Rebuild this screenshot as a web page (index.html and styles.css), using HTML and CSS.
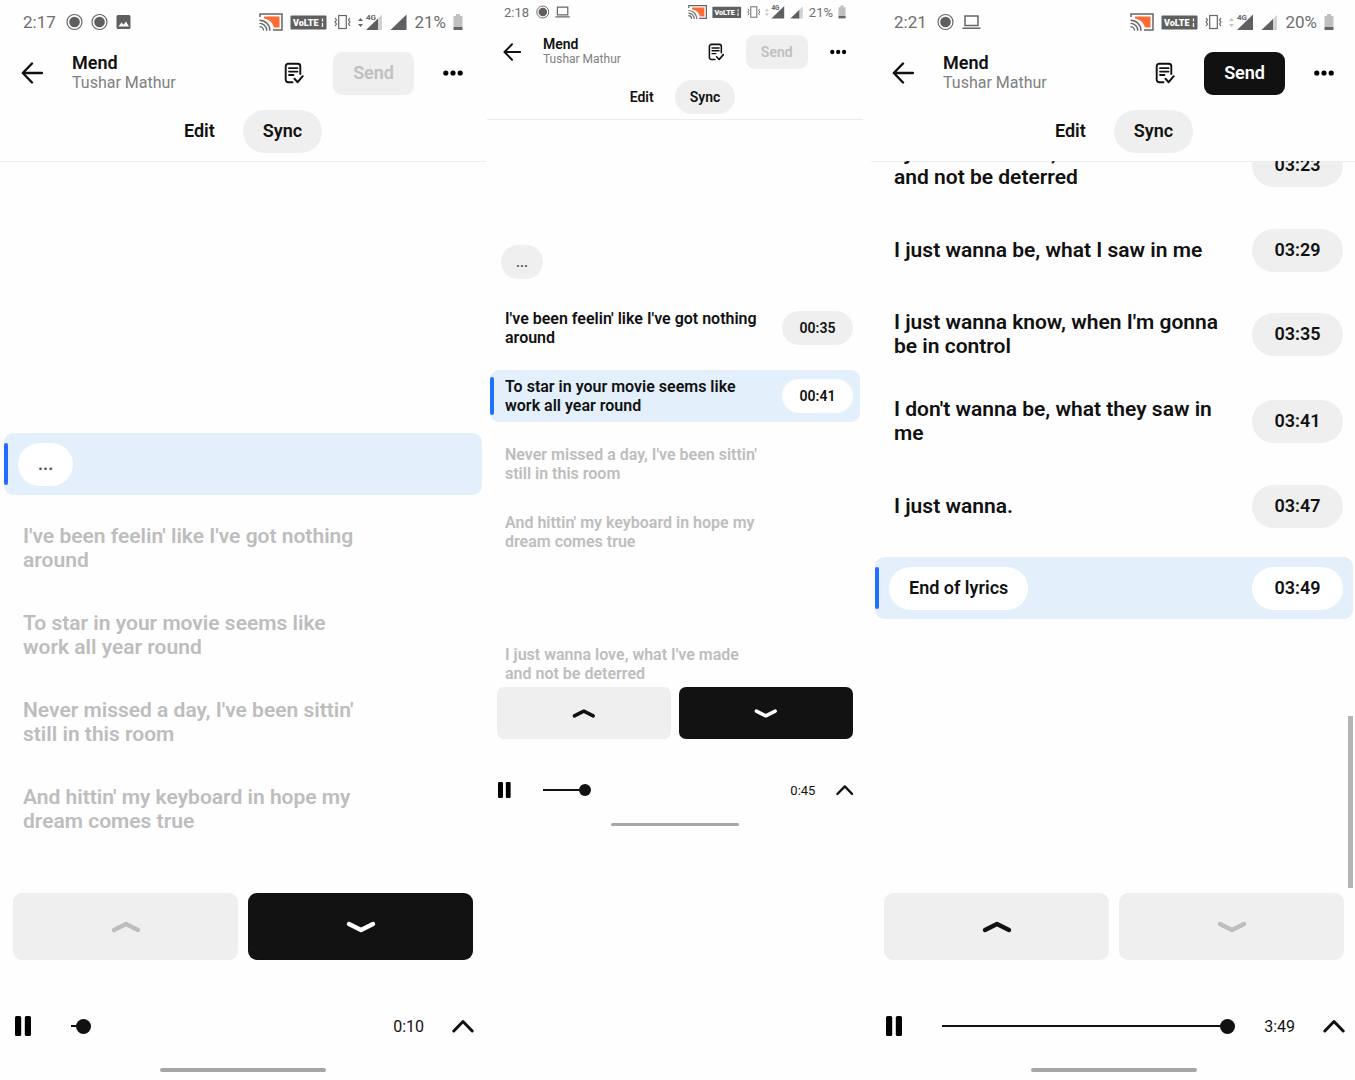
FILE: index.html
```
<!DOCTYPE html>
<html lang="en">
<head>
  <meta charset="UTF-8">
  <meta name="viewport" content="width=device-width, initial-scale=1.0">
  <title>Mend - Lyrics Sync</title>
  <link rel="stylesheet" href="styles.css">
</head>
<body>
  <!-- Shared icons -->
  <svg class="sprite" aria-hidden="true">
    <symbol id="icon-record" viewBox="0 0 17 20">
      <circle cx="8.500" cy="10" r="7.500" fill="none" stroke="#666" stroke-width="1.200"/>
      <circle cx="8.500" cy="10" r="5.300" fill="#5f5f5f"/>
    </symbol>
    <symbol id="icon-image" viewBox="0 0 15 20">
      <rect x="0.500" y="3" width="14" height="14" rx="1.500" fill="#5f5f5f"/>
      <path d="M2.500 14.500l3-4 2 2.200 2.500-3.200 3 5z" fill="#fff"/>
    </symbol>
    <symbol id="icon-laptop" viewBox="0 0 19 20">
      <path d="M3 4h13v9.500H3zM0.500 16.200h18" fill="none" stroke="#666" stroke-width="1.500"/>
    </symbol>
    <symbol id="icon-cast" viewBox="0 0 24 20">
      <path d="M1 5V2h22v16H14" fill="none" stroke="#666" stroke-width="1.500"/>
      <path d="M5 4.500h15.500v11H15C13.500 10.500 10.500 7.500 5 6.500z" fill="#ff6b35"/>
      <path d="M0.500 8.200a10.500 10.500 0 0 1 10.500 10.500M0.500 11.400a7.300 7.300 0 0 1 7.300 7.300M0.500 14.600a4 4 0 0 1 4 4" fill="none" stroke="#666" stroke-width="1.400"/>
    </symbol>
    <symbol id="icon-volte" viewBox="0 0 37 20">
      <rect x="0.500" y="3.500" width="36" height="14" rx="1" fill="#5f5f5f"/>
      <text x="3" y="14" class="volte-text">VoLTE</text>
      <path d="M32.500 6.500v3M32.500 11v4" stroke="#fff" stroke-width="1.300"/>
    </symbol>
    <symbol id="icon-vibrate" viewBox="0 0 17 20">
      <rect x="4.700" y="3.500" width="7.600" height="13" fill="none" stroke="#666" stroke-width="1.200"/>
      <path d="M1 6l1.500 2L1 10l1.500 2L1 14M16 6l-1.500 2L16 10l-1.500 2 1.500 2" fill="none" stroke="#666" stroke-width="1.200"/>
    </symbol>
    <symbol id="icon-4g" viewBox="0 0 25 20">
      <path d="M0 9l2.500-3L5 9zM0 12l2.500 3L5 12z" fill="#666"/>
      <path d="M8 18L20 6.500V18z" fill="#5f5f5f"/>
      <path d="M20 6.500l4-4V18h-4z" fill="#d2d2d2"/>
      <text x="8" y="8" class="net-text">4G</text>
    </symbol>
    <symbol id="icon-4g-full" viewBox="0 0 25 20">
      <path d="M0 9l2.500-3L5 9zM0 12l2.500 3L5 12z" fill="#c4c4c4"/>
      <path d="M8 18L24 2.500V18z" fill="#5f5f5f"/>
      <text x="8" y="8" class="net-text">4G</text>
    </symbol>
    <symbol id="icon-signal" viewBox="0 0 17 20">
      <path d="M0.500 18L16.500 2.500V18z" fill="#5f5f5f"/>
    </symbol>
    <symbol id="icon-signal-low" viewBox="0 0 17 20">
      <path d="M0.500 18L12 7v11z" fill="#5f5f5f"/>
      <path d="M12 7l4-4v15h-4z" fill="#d2d2d2"/>
    </symbol>
    <symbol id="icon-battery" viewBox="0 0 10 20">
      <path d="M0.500 4H3V2h4v2h2.500v11h-9z" fill="#c0c0c0"/>
      <path d="M0.500 15h9v3h-9z" fill="#666"/>
    </symbol>
    <symbol id="icon-back" viewBox="0 0 22 22">
      <path d="M11 1.500L1.800 11l9.200 9.500M2 11h19" fill="none" stroke="#111" stroke-width="2.400" stroke-linecap="round" stroke-linejoin="round"/>
    </symbol>
    <symbol id="icon-doc" viewBox="0 0 20 22">
      <path d="M8.500 20.200H4.200a2.500 2.500 0 0 1-2.500-2.500V4.200a2.500 2.500 0 0 1 2.500-2.500h9.600a2.500 2.500 0 0 1 2.500 2.500V12" fill="none" stroke="#111" stroke-width="1.900" stroke-linecap="round"/>
      <path d="M5 6.200h8.500M5 9.600h8.500M5 13h4.500" fill="none" stroke="#111" stroke-width="1.800" stroke-linecap="round"/>
      <path d="M10.500 16.800l3.200 3.400 5-6" fill="none" stroke="#111" stroke-width="2" stroke-linecap="round" stroke-linejoin="round"/>
    </symbol>
    <symbol id="icon-more" viewBox="0 0 20 22">
      <circle cx="2.800" cy="11" r="2.600"/>
      <circle cx="10" cy="11" r="2.600"/>
      <circle cx="17.200" cy="11" r="2.600"/>
    </symbol>
    <symbol id="icon-up" viewBox="0 0 30 14">
      <path d="M3 10L15 4l12 6" fill="none" stroke="currentColor" stroke-width="4.400" stroke-linecap="round" stroke-linejoin="round"/>
    </symbol>
    <symbol id="icon-down" viewBox="0 0 30 14">
      <path d="M3 4l12 6 12-6" fill="none" stroke="currentColor" stroke-width="4.400" stroke-linecap="round" stroke-linejoin="round"/>
    </symbol>
    <symbol id="icon-pause" viewBox="0 0 16 20">
      <rect x="0" y="0" width="6.200" height="20" rx="1.500"/>
      <rect x="9.800" y="0" width="6.200" height="20" rx="1.500"/>
    </symbol>
    <symbol id="icon-expand" viewBox="0 0 22 20">
      <path d="M1.800 15L11 5.500l9.200 9.500" fill="none" stroke="#111" stroke-width="3" stroke-linecap="round" stroke-linejoin="round"/>
    </symbol>
  </svg>

  <main class="screens">
    <!-- Start of the song -->
    <section class="phone">
      <div class="status">
        <span class="clock">2:17</span>
        <svg viewBox="0 0 17 20"><use href="#icon-record"/></svg>
        <svg viewBox="0 0 17 20"><use href="#icon-record"/></svg>
        <svg viewBox="0 0 15 20"><use href="#icon-image"/></svg>
        <div class="status-right">
          <svg viewBox="0 0 24 20"><use href="#icon-cast"/></svg>
          <svg viewBox="0 0 37 20"><use href="#icon-volte"/></svg>
          <svg viewBox="0 0 17 20"><use href="#icon-vibrate"/></svg>
          <svg viewBox="0 0 25 20"><use href="#icon-4g"/></svg>
          <svg viewBox="0 0 17 20"><use href="#icon-signal"/></svg>
          <span class="percent">21%</span>
          <svg viewBox="0 0 10 20"><use href="#icon-battery"/></svg>
        </div>
      </div>
      <header class="topbar">
        <button class="icon-button" aria-label="Back"><svg viewBox="0 0 22 22"><use href="#icon-back"/></svg></button>
        <div class="song">
          <h2>Mend</h2>
          <p>Tushar Mathur</p>
        </div>
        <button class="icon-button" aria-label="Guidelines"><svg viewBox="0 0 20 22"><use href="#icon-doc"/></svg></button>
        <button class="send" disabled>Send</button>
        <button class="icon-button" aria-label="More"><svg viewBox="0 0 20 22"><use href="#icon-more"/></svg></button>
      </header>
      <nav class="tabs">
        <button class="tab">Edit</button>
        <button class="tab active">Sync</button>
      </nav>
      <ul class="lyrics">
        <li class="row current"><button class="pill dots">...</button></li>
        <li class="row pending"><p>I've been feelin' like I've got nothing around</p></li>
        <li class="row pending"><p>To star in your movie seems like work all year round</p></li>
        <li class="row pending"><p>Never missed a day, I've been sittin' still in this room</p></li>
        <li class="row pending"><p>And hittin' my keyboard in hope my dream comes true</p></li>
      </ul>
      <div class="steps">
        <button class="step" aria-label="Previous line" disabled><svg viewBox="0 0 30 14"><use href="#icon-up"/></svg></button>
        <button class="step step-dark" aria-label="Next line"><svg viewBox="0 0 30 14"><use href="#icon-down"/></svg></button>
      </div>
      <div class="player">
        <button class="icon-button" aria-label="Pause"><svg viewBox="0 0 16 20"><use href="#icon-pause"/></svg></button>
        <input type="range" class="seek" aria-label="Position" min="0" max="229" value="10" style="--played: 0.044">
        <span class="time">0:10</span>
        <button class="icon-button" aria-label="Expand player"><svg viewBox="0 0 22 20"><use href="#icon-expand"/></svg></button>
      </div>
      <div class="home-bar"></div>
    </section>

    <!-- Lines being synced -->
    <section class="phone phone-small">
      <div class="status">
        <span class="clock">2:18</span>
        <svg viewBox="0 0 17 20"><use href="#icon-record"/></svg>
        <svg viewBox="0 0 19 20"><use href="#icon-laptop"/></svg>
        <div class="status-right">
          <svg viewBox="0 0 24 20"><use href="#icon-cast"/></svg>
          <svg viewBox="0 0 37 20"><use href="#icon-volte"/></svg>
          <svg viewBox="0 0 17 20"><use href="#icon-vibrate"/></svg>
          <svg viewBox="0 0 25 20"><use href="#icon-4g-full"/></svg>
          <svg viewBox="0 0 17 20"><use href="#icon-signal-low"/></svg>
          <span class="percent">21%</span>
          <svg viewBox="0 0 10 20"><use href="#icon-battery"/></svg>
        </div>
      </div>
      <header class="topbar">
        <button class="icon-button" aria-label="Back"><svg viewBox="0 0 22 22"><use href="#icon-back"/></svg></button>
        <div class="song">
          <h2>Mend</h2>
          <p>Tushar Mathur</p>
        </div>
        <button class="icon-button" aria-label="Guidelines"><svg viewBox="0 0 20 22"><use href="#icon-doc"/></svg></button>
        <button class="send" disabled>Send</button>
        <button class="icon-button" aria-label="More"><svg viewBox="0 0 20 22"><use href="#icon-more"/></svg></button>
      </header>
      <nav class="tabs">
        <button class="tab">Edit</button>
        <button class="tab active">Sync</button>
      </nav>
      <ul class="lyrics">
        <li class="row"><button class="pill dots">...</button></li>
        <li class="row"><p>I've been feelin' like I've got nothing around</p><button class="pill stamp">00:35</button></li>
        <li class="row current"><p>To star in your movie seems like work all year round</p><button class="pill stamp">00:41</button></li>
        <li class="row pending"><p>Never missed a day, I've been sittin' still in this room</p></li>
        <li class="row pending"><p>And hittin' my keyboard in hope my dream comes true</p></li>
        <li class="row pending"></li>
        <li class="row pending"><p>I just wanna love, what I've made and not be deterred</p></li>
      </ul>
      <div class="steps">
        <button class="step" aria-label="Previous line"><svg viewBox="0 0 30 14"><use href="#icon-up"/></svg></button>
        <button class="step step-dark" aria-label="Next line"><svg viewBox="0 0 30 14"><use href="#icon-down"/></svg></button>
      </div>
      <div class="player">
        <button class="icon-button" aria-label="Pause"><svg viewBox="0 0 16 20"><use href="#icon-pause"/></svg></button>
        <input type="range" class="seek" aria-label="Position" min="0" max="229" value="45" style="--played: 0.197">
        <span class="time">0:45</span>
        <button class="icon-button" aria-label="Expand player"><svg viewBox="0 0 22 20"><use href="#icon-expand"/></svg></button>
      </div>
      <div class="home-bar"></div>
    </section>

    <!-- End of the song -->
    <section class="phone phone-end">
      <div class="status">
        <span class="clock">2:21</span>
        <svg viewBox="0 0 17 20"><use href="#icon-record"/></svg>
        <svg viewBox="0 0 19 20"><use href="#icon-laptop"/></svg>
        <div class="status-right">
          <svg viewBox="0 0 24 20"><use href="#icon-cast"/></svg>
          <svg viewBox="0 0 37 20"><use href="#icon-volte"/></svg>
          <svg viewBox="0 0 17 20"><use href="#icon-vibrate"/></svg>
          <svg viewBox="0 0 25 20"><use href="#icon-4g-full"/></svg>
          <svg viewBox="0 0 17 20"><use href="#icon-signal-low"/></svg>
          <span class="percent">20%</span>
          <svg viewBox="0 0 10 20"><use href="#icon-battery"/></svg>
        </div>
      </div>
      <header class="topbar">
        <button class="icon-button" aria-label="Back"><svg viewBox="0 0 22 22"><use href="#icon-back"/></svg></button>
        <div class="song">
          <h2>Mend</h2>
          <p>Tushar Mathur</p>
        </div>
        <button class="icon-button" aria-label="Guidelines"><svg viewBox="0 0 20 22"><use href="#icon-doc"/></svg></button>
        <button class="send">Send</button>
        <button class="icon-button" aria-label="More"><svg viewBox="0 0 20 22"><use href="#icon-more"/></svg></button>
      </header>
      <nav class="tabs">
        <button class="tab">Edit</button>
        <button class="tab active">Sync</button>
      </nav>
      <ul class="lyrics">
        <li class="row"><p>I just wanna love, what I've made and not be deterred</p><button class="pill stamp">03:23</button></li>
        <li class="row"><p>I just wanna be, what I saw in me</p><button class="pill stamp">03:29</button></li>
        <li class="row"><p>I just wanna know, when I'm gonna be in control</p><button class="pill stamp">03:35</button></li>
        <li class="row"><p>I don't wanna be, what they saw in me</p><button class="pill stamp">03:41</button></li>
        <li class="row"><p>I just wanna.</p><button class="pill stamp">03:47</button></li>
        <li class="row current"><button class="pill">End of lyrics</button><button class="pill stamp">03:49</button></li>
      </ul>
      <div class="steps">
        <span class="scrollbar"></span>
        <button class="step" aria-label="Previous line"><svg viewBox="0 0 30 14"><use href="#icon-up"/></svg></button>
        <button class="step" aria-label="Next line" disabled><svg viewBox="0 0 30 14"><use href="#icon-down"/></svg></button>
      </div>
      <div class="player">
        <button class="icon-button" aria-label="Pause"><svg viewBox="0 0 16 20"><use href="#icon-pause"/></svg></button>
        <input type="range" class="seek" aria-label="Position" min="0" max="229" value="229" style="--played: 1">
        <span class="time">3:49</span>
        <button class="icon-button" aria-label="Expand player"><svg viewBox="0 0 22 20"><use href="#icon-expand"/></svg></button>
      </div>
      <div class="home-bar"></div>
    </section>
  </main>
</body>
</html>
```
FILE: styles.css
```
/* General */
* {
  box-sizing: border-box;
}

body {
  margin: 0;
  font-family: Roboto, "Liberation Sans", sans-serif;
  background-color: #fefefe;
  color: #111111;
  overflow: hidden;
}

h2, p, ul {
  margin: 0;
  padding: 0;
}

button {
  padding: 0;
  border: none;
  background: none;
  font-family: inherit;
  color: inherit;
  cursor: pointer;
}

svg {
  display: block;
}

.sprite {
  display: none;
}

.screens {
  display: grid;
  grid-template-columns: 486fr 385fr 484fr;
}

/* Phone */
.phone {
  display: flex;
  flex-direction: column;
  min-width: 0;
  height: 100vh;
}

.phone-small {
  height: auto;
  align-self: start;
  padding: 0 8px 0 1px;
}

.phone-end {
  margin-right: -2px;
}

/* Status bar */
.status {
  display: flex;
  align-items: center;
  gap: 8px;
  height: 44px;
  padding: 0 23px;
  font-size: 17px;
  color: #6e6e6e;
}

.status svg {
  height: 20px;
  flex: none;
}

.clock {
  margin-right: 2px;
}

.status-right {
  display: flex;
  align-items: center;
  gap: 7px;
  margin-left: auto;
}

.volte-text {
  font-size: 9px;
  font-weight: 900;
  fill: #ffffff;
}

.net-text {
  font-size: 8px;
  font-weight: 700;
  fill: #666666;
}

/* Top bar */
.topbar {
  display: flex;
  align-items: center;
  gap: 29px;
  height: 58px;
  padding: 0 23px 0 21px;
}

.topbar svg {
  height: 22px;
}

.song {
  flex: 1;
}

.song h2 {
  font-size: 18px;
  font-weight: 600;
  line-height: 20px;
}

.song p {
  font-size: 16px;
  line-height: 20px;
  color: #808080;
}

.send {
  height: 43px;
  padding: 0 20px 2px;
  border-radius: 9px;
  font-size: 18px;
  font-weight: 600;
  color: #ffffff;
  background-color: #111111;
}

.send:disabled {
  color: #c0c0c0;
  background-color: #efefef;
}

/* Tabs */
.tabs {
  display: flex;
  justify-content: center;
  gap: 8px;
  padding: 8px 0;
  border-bottom: 1px solid #ececec;
}

.tab {
  height: 43px;
  padding: 0 20px 2px;
  border-radius: 22px;
  font-size: 18px;
  font-weight: 600;
}

.tab.active {
  background-color: #efefef;
}

/* Lyrics */
.lyrics {
  position: relative;
  display: flex;
  flex-direction: column;
  flex: 1;
  gap: 20px;
  min-height: 0;
  margin-top: -1px;
  padding: 272px 4px 0;
  overflow: hidden;
  list-style: none;
}

.phone-end .lyrics {
  justify-content: flex-end;
  padding: 0 4px 274px;
}

.row {
  position: relative;
  display: flex;
  align-items: center;
  flex: none;
  min-height: 62px;
  padding: 9px 10px 9px 14px;
  border-radius: 9px;
}

.row p {
  width: 76%;
  padding: 0 0 1px 5px;
  font-size: 21px;
  font-weight: 600;
  line-height: 24px;
}

.row.pending {
  color: #bdbdbd;
}

.row.current {
  background-color: #e3f0fc;
}

.row.current::before {
  content: "";
  position: absolute;
  left: 0;
  top: 10px;
  bottom: 10px;
  width: 4px;
  border-radius: 2px;
  background-color: #1f70ff;
}

.pill {
  height: 43px;
  padding: 0 20px 2px;
  border-radius: 22px;
  font-size: 18px;
  font-weight: 600;
  background-color: #efefef;
}

.row.current .pill {
  background-color: #ffffff;
}

.dots {
  color: #555555;
}

.stamp {
  flex: none;
  width: 91px;
  margin-left: auto;
  padding: 0 0 2px;
}

/* Line buttons */
.steps {
  position: relative;
  display: flex;
  gap: 10px;
  padding: 0 13px;
}

.step {
  display: flex;
  flex: 1;
  align-items: center;
  justify-content: center;
  height: 67px;
  border-radius: 9px;
  background-color: #efefef;
}

.step svg {
  height: 14px;
}

.step:disabled {
  color: #bdbdbd;
}

.step-dark {
  color: #ffffff;
  background-color: #121212;
}

.scrollbar {
  position: absolute;
  right: 4px;
  bottom: 100%;
  width: 5px;
  height: 172px;
  margin-bottom: 5px;
  background-color: #b4b4b4;
}

/* Player */
.player {
  display: flex;
  align-items: center;
  height: 44px;
  margin-top: 44px;
  padding: 0 12px 0 15px;
}

.player svg {
  height: 20px;
}

.seek {
  appearance: none;
  flex: 1;
  min-width: 0;
  height: 16px;
  margin: 0 29px 0 33px;
  /* played part, inset by half the thumb */
  background: linear-gradient(#111111, #111111) no-repeat 7px center / calc((100% - 14px) * var(--played)) 2px;
}

.seek::-webkit-slider-thumb {
  appearance: none;
  width: 15px;
  height: 15px;
  border-radius: 50%;
  background-color: #111111;
}

.time {
  margin-right: 28px;
  font-size: 16px;
}

.home-bar {
  width: 34%;
  height: 4px;
  margin: 20px auto 8px;
  border-radius: 2px;
  background-color: #a6a6a6;
}

/* Small phone */
.phone-small .status {
  gap: 5px;
  height: 24px;
  padding: 0 17px;
  font-size: 13px;
}

.phone-small .status svg {
  height: 16px;
}

.phone-small .status-right {
  gap: 5px;
}

.phone-small .topbar {
  gap: 22px;
  height: 56px;
  padding: 0 17px 0 16px;
}

.phone-small .topbar svg {
  height: 18px;
}

.phone-small .song h2 {
  font-size: 14px;
  line-height: 15px;
}

.phone-small .song p {
  font-size: 12px;
  line-height: 15px;
}

.phone-small .send,
.phone-small .tab,
.phone-small .pill {
  height: 34px;
  padding: 0 15px 1px;
  font-size: 14px;
}

.phone-small .tabs {
  gap: 6px;
  padding: 0 0 5px;
}

.phone-small .lyrics {
  gap: 16px;
  padding: 119px 3px 0;
}

.phone-small .row {
  min-height: 48px;
  padding: 7px 7px 7px 11px;
}

.phone-small .row p {
  padding: 0 0 0 4px;
  font-size: 16px;
  line-height: 19px;
}

.phone-small .row.current::before {
  top: 7px;
  bottom: 7px;
}

.phone-small .stamp {
  width: 71px;
  padding: 0 0 1px;
}

.phone-small .steps {
  gap: 8px;
  margin-top: -3px;
  padding: 0 10px;
}

.phone-small .step {
  height: 52px;
  border-radius: 7px;
}

.phone-small .step svg {
  height: 11px;
}

.phone-small .player {
  height: 34px;
  margin-top: 34px;
  padding: 0 9px 0 11px;
}

.phone-small .player svg {
  height: 16px;
}

.phone-small .seek {
  margin: 0 22px 0 25px;
}

.phone-small .seek::-webkit-slider-thumb {
  width: 12px;
  height: 12px;
}

.phone-small .time {
  margin-right: 21px;
  font-size: 13px;
}

.phone-small .home-bar {
  height: 3px;
  margin: 16px auto 0;
}
```
